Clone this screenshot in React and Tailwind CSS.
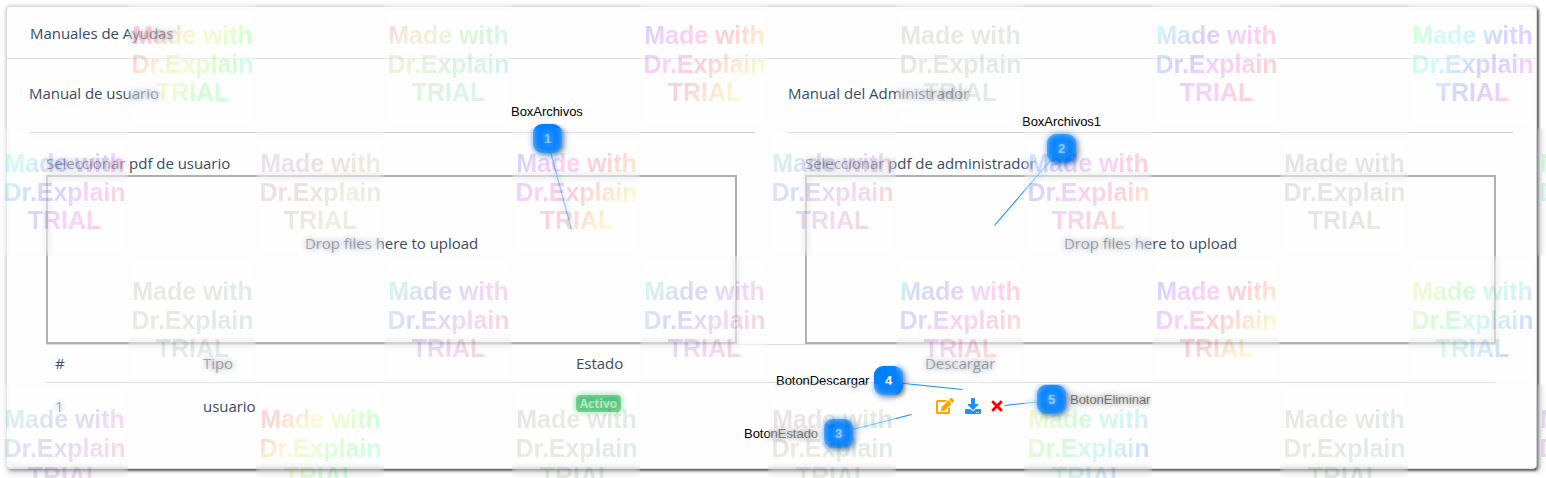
import React from "react";
import { FaEdit, FaDownload, FaTimes } from "react-icons/fa";

// Watermark tiles: left, top, starting hue, saturation
const TILES = [
  [128, 0, 325, 100], [384, 0, 0, 60], [640, 0, 240, 100], [896, 0, 350, 12], [1152, 0, 175, 100], [1408, 0, 110, 100],
  [0, 128, 150, 90], [256, 128, 270, 35], [512, 128, 235, 100], [768, 128, 170, 60], [1024, 128, 195, 90], [1280, 128, 215, 14], [1536, 128, 110, 90],
  [128, 256, 0, 14], [384, 256, 165, 65], [640, 256, 165, 65], [896, 256, 190, 85], [1152, 256, 235, 100], [1408, 256, 45, 85],
  [0, 384, 150, 50], [256, 384, 335, 100], [512, 384, 345, 15], [768, 384, 325, 22], [1024, 384, 45, 85], [1280, 384, 5, 15], [1536, 384, 240, 50],
];

function rainbow(hue, sat) {
  const stops = [0, 1, 2, 3, 4, 5, 6].map((i) => `hsl(${(hue + i * 38) % 360} ${sat}% 91%)`);
  return `linear-gradient(130deg, ${stops.join(", ")})`;
}

function Watermark({ tile: [left, top, hue, sat] }) {
  return (
    <>
      <div className="absolute h-32 w-32 bg-white/5 opacity-60 backdrop-blur-[3px]" style={{ left, top }} />
      <div className="absolute h-32 w-32 overflow-hidden pl-[3px] pt-[21px] mix-blend-multiply" style={{ left, top }}>
        <div
          className="w-[123px] whitespace-nowrap bg-clip-text text-center font-['Liberation_Sans'] text-[25px] font-bold leading-[28.5px] text-transparent"
          style={{ backgroundImage: rainbow(hue, sat) }}
        >
          Made with
          <br />
          Dr.Explain
          <br />
          TRIAL
        </div>
      </div>
    </>
  );
}

const CALLOUTS = [
  { n: 1, x: 533, y: 124, label: "BoxArchivos", lx: 511, ly: 104, w: 72 },
  { n: 2, x: 1047, y: 134, label: "BoxArchivos1", lx: 1022, ly: 114, w: 79 },
  { n: 3, x: 824, y: 419, label: "BotonEstado", lx: 744, ly: 426, w: 75 },
  { n: 4, x: 874, y: 366, label: "BotonDescargar", lx: 776, ly: 373, w: 93 },
  { n: 5, x: 1037, y: 385, label: "BotonEliminar", lx: 1070, ly: 392, w: 81 },
];

function Callouts() {
  return (
    <>
      <svg className="absolute left-0 top-0" width="1546" height="478" fill="none" stroke="#1a8cff" strokeWidth="1.1">
        <path d="M550 150L571.5 229.500M1056 154L994.500 225.500M845 431.500L911.500 414.500M895 382.500L962.500 389.500M1045 401L1004.500 405.500" />
      </svg>
      {CALLOUTS.map((c) => (
        <React.Fragment key={c.n}>
          <div
            className="absolute flex h-[29px] w-[29px] items-center justify-center rounded-[9px] bg-[#0080ff] font-['Liberation_Sans'] text-[13px] font-bold text-white shadow-[2px_2px_4px_rgba(0,0,0,0.5)]"
            style={{ left: c.x, top: c.y }}
          >
            {c.n}
          </div>
          <div
            className="absolute whitespace-nowrap font-['Liberation_Sans'] text-[13px] leading-4 text-black"
            style={{ left: c.lx, top: c.ly, width: c.w }}
          >
            {c.label}
          </div>
        </React.Fragment>
      ))}
    </>
  );
}

function Column({ title, label }) {
  return (
    <section className="w-[725px]">
      <h2 className="h-[74px] border-b border-[#c8cacf] pt-[22px] leading-6">{title}</h2>
      <div className="mx-[17px] pt-[18px]">
        <label className="block h-6 leading-6">{label}</label>
        <div className="flex h-[169px] items-center justify-center border-2 border-[#b0b0b0] pb-8">Drop files here to upload</div>
      </div>
    </section>
  );
}

export default function App() {
  return (
    <div className="relative h-[478px] w-[1546px] overflow-hidden bg-white pl-1.5 pt-1.5 font-['Open_Sans','Noto_Sans',sans-serif] text-[15px] tracking-[-0.04px] text-[#3c4b64]">
      <main className="h-[463px] w-[1531px] rounded border border-[#d8dbe0] bg-[#fefefe] shadow-[0_0_1px_2px_rgba(0,0,0,0.07),2px_2px_3px_rgba(0,0,0,0.65)]">
        <header className="h-[52px] border-b border-[#d8dbe0] pl-[23px] pt-[14px] leading-6">Manuales de Ayudas</header>
        <div className="flex gap-[34px] px-[22px]">
          <Column title="Manual de usuario" label="Seleccionar pdf de usuario" />
          <Column title="Manual del Administrador" label="Seleccionar pdf de administrador" />
        </div>
        <div className="ml-[39px] w-[1450px]">
          <div className="grid h-[39px] grid-cols-[148px_373px_349px_1fr] items-center border-y border-[#d8dbe0] pl-[9px]">
            <span>#</span>
            <span>Tipo</span>
            <span>Estado</span>
            <span>Descargar</span>
          </div>
          <div className="grid h-[46px] grid-cols-[148px_373px_360px_1fr] items-center pl-[9px]">
            <span>1</span>
            <span>usuario</span>
            <span className="mb-[5px] flex h-[17px] w-[45px] items-center justify-center rounded bg-[#2eb85c] text-[12px] font-bold text-white">Activo</span>
            <span className="flex items-center">
              <FaEdit className="text-[18px] text-[#ffa500]" />
              <FaDownload className="ml-[11px] text-[16px] text-[#1e90ff]" />
              <FaTimes className="ml-2 text-[16px] text-[#ff0000]" />
            </span>
          </div>
        </div>
      </main>
      <Callouts />
      {TILES.map((t) => (
        <Watermark key={`${t[0]}-${t[1]}`} tile={t} />
      ))}
    </div>
  );
}
